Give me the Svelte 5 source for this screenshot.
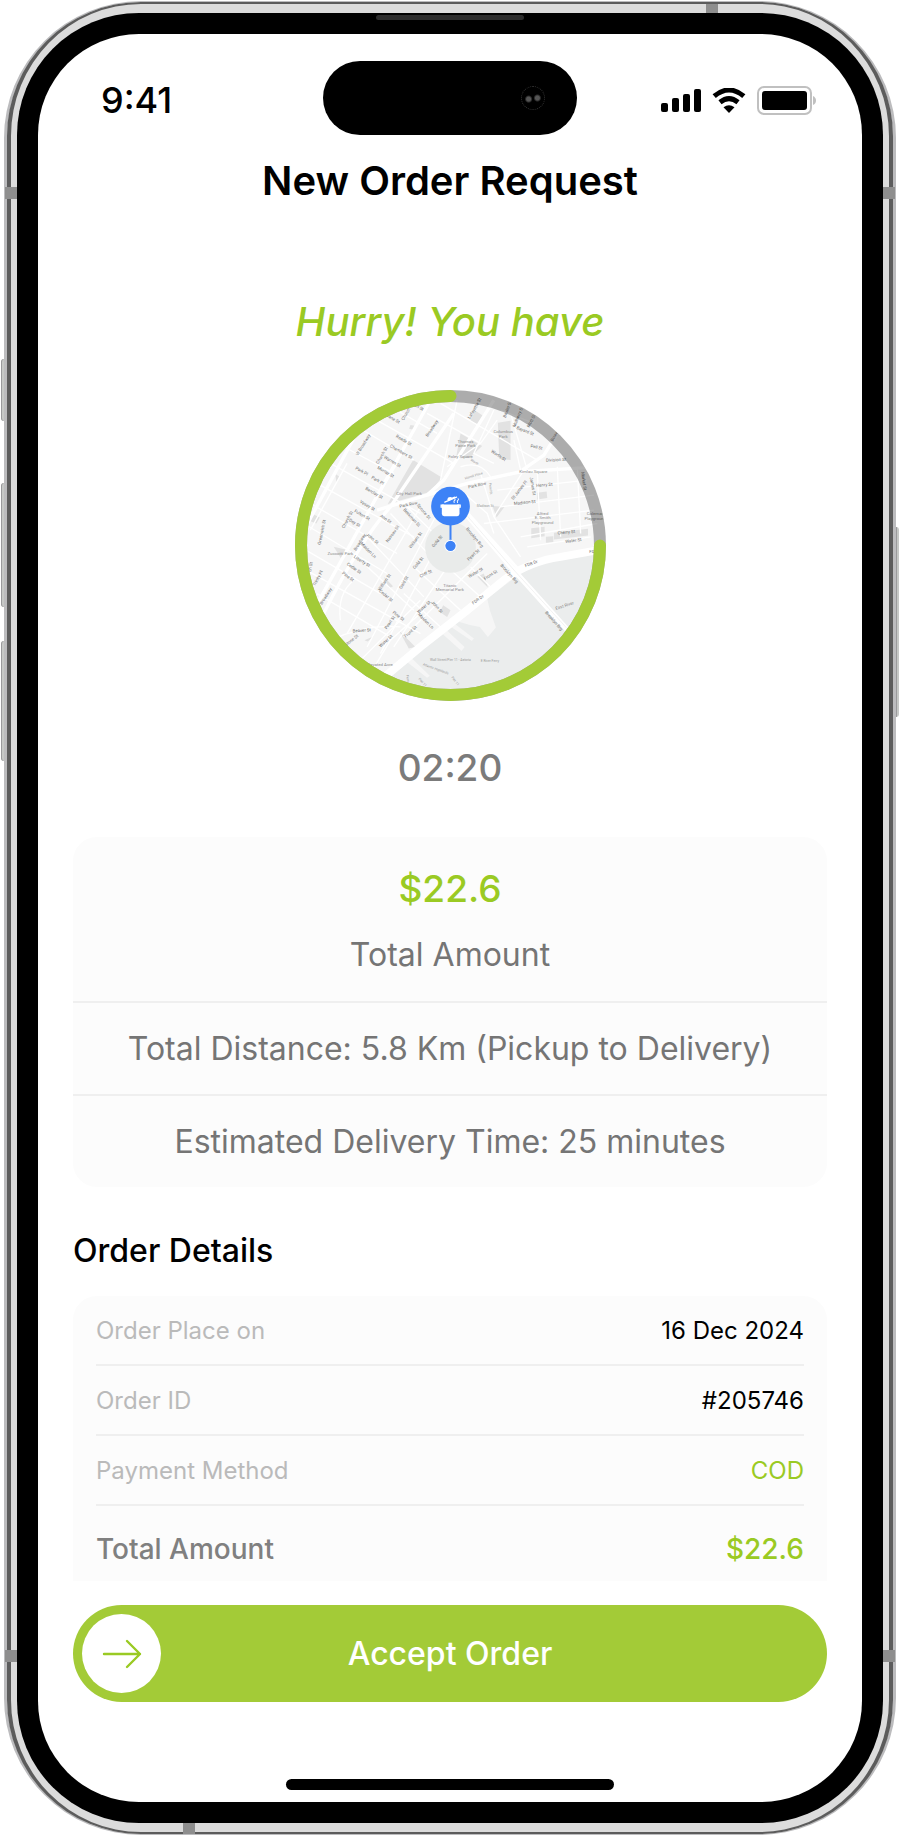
<script lang="ts">
  interface Detail {
    label: string;
    value: string;
    accent?: boolean;
  }

  interface MapLabel {
    x: number;
    y: number;
    angle: number;
    text: string;
  }

  const amount = '$22.6';
  const timeLeft = '02:20';

  const details: Detail[] = [
    { label: 'Order Place on', value: '16 Dec 2024' },
    { label: 'Order ID', value: '#205746' },
    { label: 'Payment Method', value: 'COD', accent: true },
  ];

  const mainRoads = [
    'M100 690 L300 330 L450 60',
    'M130 700 Q240 480 330 380 L520 100',
    'M60 470 L250 120 L300 70',
    'M290 390 L440 345 L490 300 L640 60',
    'M440 345 L560 310 L720 275 L930 262',
    'M725 270 L790 225 L830 160',
  ];

  const streets = [
    'M150 250 L420 400',
    'M190 200 L340 280',
    'M230 140 L400 240',
    'M270 110 L520 250',
    'M330 80 L470 160',
    'M110 310 L400 470',
    'M90 370 L350 520',
    'M70 430 L320 580',
    'M60 500 L300 640',
    'M60 560 L420 760',
    'M110 640 L330 770',
    'M200 250 L90 450',
    'M350 250 L90 700',
    'M420 380 L200 760',
    'M470 400 L260 800',
    'M500 440 L300 820',
    'M560 470 L340 800',
    'M620 520 L370 770',
    'M330 400 L480 560',
    'M370 370 L560 560',
    'M260 470 L430 650',
    'M240 540 L400 690',
    'M400 560 L540 690',
    'M370 640 L480 740',
    'M500 560 L600 650',
    'M570 560 L640 630',
    'M150 780 Q260 730 360 740',
    'M230 850 L420 660',
    'M180 720 Q170 640 220 600',
    'M270 880 L330 780 L430 690',
    'M440 100 L600 190',
    'M480 70 L770 240',
    'M530 60 L480 300',
    'M640 90 L580 220 L640 250',
    'M690 100 L740 270',
    'M760 130 L660 90',
    'M720 270 L700 180',
    'M730 270 L640 410',
    'M770 270 L780 480',
    'M830 260 L840 470',
    'M890 260 L900 460',
    'M650 330 L920 300',
    'M660 380 L940 345',
    'M610 430 L940 390',
    'M720 470 L950 430',
    'M740 500 L930 470',
    'M540 330 L620 400 L640 460',
    'M600 280 L640 410 L720 530',
    'M540 260 Q600 240 630 290',
    'M500 260 L600 190 L650 120',
  ];

  const parks = [
    'M398 240 L484 292 L450 335 L322 372 Z',
    'M585 92 L612 110 L596 138 L568 122 Z',
    'M540 160 L605 198 L568 232 L526 236 Z',
    'M652 128 L690 122 L690 240 L656 236 Z',
    'M752 444 L792 440 L792 468 L752 474 Z',
    'M770 338 L798 334 L800 354 L770 358 Z',
    'M636 378 L672 380 L648 412 Z',
    'M160 500 L204 510 L184 538 Z',
    'M165 282 L178 290 L168 308 Z',
    'M310 590 L338 618 L326 624 Z',
    'M796 470 L818 468 L818 486 L796 488 Z',
    'M95 400 L118 412 L108 430 L92 424 Z',
    'M440 518 L462 520 L450 540 Z',
    'M488 675 L510 690 L500 710 L478 695 Z',
    'M355 750 L405 800 L385 805 Z',
    'M390 135 L408 138 L402 150 L386 146 Z',
    'M820 458 L922 446 L922 466 L820 478 Z',
    'M590 590 L610 580 L622 622 Z',
    'M252 780 L280 768 L262 784 Z',
  ];

  const mapLabels: MapLabel[] = [
    { x: 338, y: 116, angle: 30, text: 'Jane St' },
    { x: 376, y: 102, angle: -60, text: 'Church' },
    { x: 416, y: 82, angle: 30, text: 'ch St' },
    { x: 454, y: 145, angle: -56, text: 'Broadway' },
    { x: 582, y: 85, angle: -60, text: 'Lafayette St' },
    { x: 370, y: 180, angle: 30, text: 'Reade St' },
    { x: 362, y: 215, angle: 30, text: 'Chambers St' },
    { x: 248, y: 194, angle: -58, text: 'W Broadway' },
    { x: 304, y: 226, angle: -60, text: 'Church St' },
    { x: 336, y: 244, angle: 30, text: 'Warren St' },
    { x: 316, y: 275, angle: 30, text: 'Murray St' },
    { x: 244, y: 273, angle: 30, text: 'Park Pl' },
    { x: 292, y: 301, angle: 30, text: 'Park Pl' },
    { x: 281, y: 338, angle: 30, text: 'Barclay St' },
    { x: 261, y: 376, angle: 30, text: 'Vesey St' },
    { x: 245, y: 404, angle: 30, text: 'Fulton St' },
    { x: 223, y: 428, angle: 30, text: 'Dey St' },
    { x: 201, y: 418, angle: -62, text: 'Church St' },
    { x: 316, y: 416, angle: 35, text: 'Ann St' },
    { x: 394, y: 412, angle: 48, text: 'Beekman St' },
    { x: 430, y: 394, angle: 50, text: 'Spruce St' },
    { x: 384, y: 373, angle: -12, text: 'Park Row' },
    { x: 590, y: 315, angle: -12, text: 'Park Row' },
    { x: 336, y: 461, angle: -55, text: 'Nassau St' },
    { x: 276, y: 475, angle: 40, text: 'John St' },
    { x: 238, y: 486, angle: -58, text: 'Broadway' },
    { x: 264, y: 510, angle: 45, text: 'Maiden Ln' },
    { x: 405, y: 480, angle: -54, text: 'William St' },
    { x: 470, y: 483, angle: -50, text: 'Gold St' },
    { x: 124, y: 456, angle: -78, text: 'Greenwich St' },
    { x: 245, y: 543, angle: 32, text: 'Liberty St' },
    { x: 221, y: 564, angle: 35, text: 'Cedar St' },
    { x: 203, y: 589, angle: 35, text: 'Pine St' },
    { x: 112, y: 594, angle: -62, text: 'Trinity Pl' },
    { x: 90, y: 560, angle: -80, text: 'ch St' },
    { x: 136, y: 648, angle: -58, text: 'Broadway' },
    { x: 312, y: 606, angle: -56, text: 'William St' },
    { x: 413, y: 548, angle: -50, text: 'Gold St' },
    { x: 370, y: 607, angle: -60, text: 'Gold St' },
    { x: 436, y: 580, angle: -25, text: 'Cliff St' },
    { x: 317, y: 646, angle: 40, text: 'Cedar St' },
    { x: 578, y: 524, angle: -42, text: 'Pearl St' },
    { x: 585, y: 577, angle: -30, text: 'Water St' },
    { x: 630, y: 584, angle: -32, text: 'Front St' },
    { x: 430, y: 680, angle: -42, text: 'Water St' },
    { x: 470, y: 680, angle: 48, text: 'John St' },
    { x: 354, y: 707, angle: 38, text: 'Pine St' },
    { x: 328, y: 727, angle: -55, text: 'Pearl St' },
    { x: 436, y: 722, angle: 45, text: 'Maiden Ln' },
    { x: 390, y: 754, angle: -42, text: 'Front St' },
    { x: 244, y: 750, angle: -4, text: 'Beaver St' },
    { x: 213, y: 780, angle: -38, text: 'Stone St' },
    { x: 316, y: 782, angle: -42, text: 'Water St' },
    { x: 734, y: 152, angle: 22, text: 'Bayard St' },
    { x: 768, y: 201, angle: 12, text: 'Pell St' },
    { x: 826, y: 239, angle: -3, text: 'Division St' },
    { x: 654, y: 226, angle: 33, text: 'Worth St' },
    { x: 791, y: 314, angle: -5, text: 'Henry St' },
    { x: 716, y: 330, angle: -52, text: 'St James Pl' },
    { x: 757, y: 318, angle: 80, text: 'James St' },
    { x: 732, y: 367, angle: -6, text: 'Madison St' },
    { x: 857, y: 456, angle: -6, text: 'Cherry St' },
    { x: 878, y: 481, angle: -8, text: 'Water St' },
    { x: 680, y: 88, angle: -70, text: 'Baxter St' },
    { x: 712, y: 110, angle: -68, text: 'Mulberry St' },
    { x: 752, y: 122, angle: -62, text: 'Mott St' },
    { x: 824, y: 164, angle: -60, text: 'Bowery' },
    { x: 910, y: 303, angle: 82, text: 'Market St' },
    { x: 752, y: 550, angle: -20, text: 'FDR Dr' },
    { x: 592, y: 658, angle: -36, text: 'FDR Dr' },
    { x: 938, y: 514, angle: 0, text: 'FDR' },
    { x: 583, y: 472, angle: 50, text: 'Brooklyn Brg' },
    { x: 686, y: 580, angle: 48, text: 'Brooklyn Brg' },
    { x: 820, y: 722, angle: 48, text: 'Brooklyn Brg' },
  ];

  const placeLabels: MapLabel[] = [
    { x: 668, y: 153, angle: 0, text: 'Columbus' },
    { x: 668, y: 168, angle: 0, text: 'Park' },
    { x: 555, y: 184, angle: 0, text: 'Thomas' },
    { x: 555, y: 197, angle: 0, text: 'Paine Park' },
    { x: 540, y: 229, angle: 0, text: 'Foley Square' },
    { x: 758, y: 274, angle: 0, text: 'Kimlau Square' },
    { x: 386, y: 340, angle: 0, text: 'City Hall Park' },
    { x: 786, y: 400, angle: 0, text: 'Alfred' },
    { x: 786, y: 413, angle: 0, text: 'E. Smith' },
    { x: 786, y: 427, angle: 0, text: 'Playground' },
    { x: 944, y: 401, angle: 0, text: 'Coleman' },
    { x: 944, y: 415, angle: 0, text: 'Playground' },
    { x: 180, y: 520, angle: 0, text: 'Zuccotti Park' },
    { x: 508, y: 616, angle: 0, text: 'Titanic' },
    { x: 508, y: 629, angle: 0, text: 'Memorial Park' },
    { x: 852, y: 676, angle: -18, text: 'East River' },
    { x: 298, y: 853, angle: 0, text: 'Elevated Acre' },
  ];

  const ferryLabels: MapLabel[] = [
    { x: 510, y: 840, angle: 0, text: 'Wall Street/Pier 11 - Astoria' },
    { x: 628, y: 842, angle: 0, text: 'E River Ferry' },
    { x: 466, y: 866, angle: 20, text: 'Atlantic Highlands' },
    { x: 524, y: 902, angle: 52, text: 'Pier 11' },
    { x: 426, y: 906, angle: 48, text: 'Pier 11' },
    { x: 382, y: 896, angle: 80, text: 'Ferry' },
    { x: 614, y: 377, angle: 0, text: 'Madison St' },
    { x: 580, y: 287, angle: -18, text: 'Hamill Place' },
    { x: 630, y: 326, angle: 85, text: 'Pearl St' },
    { x: 582, y: 246, angle: 32, text: 'Worth' },
  ];

  let accepted = $state(false);
</script>

<div class="page">
  <div class="phone">
    <span class="key action"></span>
    <span class="key volume-up"></span>
    <span class="key volume-down"></span>
    <span class="key power"></span>
    <span class="band band-top"></span>
    <span class="band band-bottom"></span>
    <span class="band band-left"></span>
    <span class="band band-left low"></span>
    <span class="band band-right"></span>
    <span class="band band-right low"></span>

    <div class="rim">
      <div class="bezel">
        <span class="speaker"></span>

        <main class="screen">
          <div class="status-bar">
            <span class="clock">9:41</span>
            <div class="island"><span class="camera"></span></div>
            <div class="indicators">
              <svg class="signal" viewBox="0 0 40 23" aria-hidden="true">
                <rect x="0" y="14" width="7" height="9" rx="2" />
                <rect x="11" y="9" width="7" height="14" rx="2" />
                <rect x="22" y="5" width="7" height="18" rx="2" />
                <rect x="33" y="0" width="7" height="23" rx="2" />
              </svg>
              <svg class="wifi" viewBox="0 0 34 25" aria-hidden="true">
                <path class="wave" d="M2.2 8.2 Q17 -4.2 31.8 8.2" />
                <path class="wave" d="M8 14.2 Q17 7 26 14.2" />
                <path d="M11.5 19.2 Q17 15.2 22.5 19.2 L17 25 Z" />
              </svg>
              <svg class="battery" viewBox="0 0 60 29" aria-hidden="true">
                <rect class="shell" x="1" y="1" width="53" height="27" rx="6" />
                <rect x="5" y="5" width="45" height="19" rx="3" />
                <path class="nub" d="M56 10 Q59 11.5 59 14.5 Q59 17.5 56 19 Z" />
              </svg>
            </div>
          </div>

          <h1>New Order Request</h1>

          <p class="hurry">Hurry! You have</p>

          <svg class="countdown" viewBox="44 30 932 932" role="img" aria-label="Pickup location">
            <defs>
              <clipPath id="map-clip">
                <circle cx="510" cy="496" r="465" />
              </clipPath>
            </defs>

            <g clip-path="url(#map-clip)">
              <rect class="land" x="44" y="30" width="932" height="932" />
              {#each parks as d}
                <path class="park" {d} />
              {/each}
              {#each streets as d}
                <path class="street" {d} />
              {/each}
              {#each mainRoads as d}
                <path class="road" {d} />
              {/each}
              <path
                class="water"
                d="M980 508 L820 538 L740 565 L706 590 L620 655 L628 690 L646 742 L622 770 L598 740 L568 734
                  L540 726 L520 712 L512 722 L580 775 L574 782 L500 732 L490 742 L552 800 L543 812 L474 750
                  L390 830 L448 886 L440 892 L376 842 L310 910 L330 970 L980 970 Z"
              />
              <circle class="radius" cx="510" cy="502" r="76" />
              <path class="highway" d="M300 900 L420 800 L560 690 L670 600 Q740 545 840 530 L980 505" />
              <path class="bridge" d="M530 370 L700 570 L870 760" />
              <path class="bridge thin" d="M556 392 L720 574" />
              <path class="bridge-line" d="M540 384 L704 574 L866 752" />

              <g class="street-names">
                {#each mapLabels as l}
                  <text x={l.x} y={l.y} transform="rotate({l.angle} {l.x} {l.y})">{l.text}</text>
                {/each}
              </g>
              <g class="place-names">
                {#each placeLabels as l}
                  <text x={l.x} y={l.y} transform="rotate({l.angle} {l.x} {l.y})">{l.text}</text>
                {/each}
              </g>
              <g class="ferry-names">
                {#each ferryLabels as l}
                  <text x={l.x} y={l.y} transform="rotate({l.angle} {l.x} {l.y})">{l.text}</text>
                {/each}
              </g>
            </g>

            <circle class="track" cx="510" cy="496" r="448" />
            <path class="progress" d="M958 496 A448 448 0 1 1 510 48" />

            <!-- restaurant pin -->
            <path class="stem" d="M510 430 V490" />
            <circle class="dot" cx="510" cy="497" r="17" />
            <circle class="pin" cx="510" cy="378" r="58" />
            <g class="pot">
              <path d="M484 373 H537 V401 Q537 408 530 408 H491 Q484 408 484 401 Z" />
              <path class="handle" d="M489 375 H482 V381 H488 M532 375 H539 V381 H533" />
              <path class="lid" d="M493 366 L528 351" />
              <path d="M500 358 Q503 348 515 352 L522 349 L526 352 L505 363 Z" />
              <path class="steam" d="M521 367 Q519 363 522 361 T523 357 M531 367 Q529 363 532 361 T533 356" />
            </g>
          </svg>

          <p class="timer">{timeLeft}</p>

          <section class="card summary">
            <div class="total">
              <strong>{amount}</strong>
              <span>Total Amount</span>
            </div>
            <p>Total Distance: 5.8 Km (Pickup to Delivery)</p>
            <p>Estimated Delivery Time: 25 minutes</p>
          </section>

          <h2>Order Details</h2>

          <dl class="card details">
            {#each details as row}
              <div class="row">
                <dt>{row.label}</dt>
                <dd class:accent={row.accent}>{row.value}</dd>
              </div>
            {/each}
            <div class="row sum">
              <dt>Total Amount</dt>
              <dd class="accent">{amount}</dd>
            </div>
          </dl>

          <button class="accept" aria-pressed={accepted} onclick={() => (accepted = !accepted)}>
            <span class="knob">
              <svg viewBox="0 0 40 30" aria-hidden="true">
                <path d="M2 15 H38 M25 2 L38 15 L25 28" />
              </svg>
            </span>
            <span class="accept-label">Accept Order</span>
          </button>

          <div class="home-indicator"></div>
        </main>
      </div>
    </div>
  </div>
</div>

<style>
  :global(body) {
    margin: 0;
    background: #fff;
  }

  .page {
    padding: 1px 4px;
    font-family: Inter, 'Open Sans', sans-serif;
    color: #000;
  }

  h1,
  h2,
  p,
  dl,
  dd {
    margin: 0;
  }

  /* Phone body */
  .phone {
    position: relative;
    border: solid #bcbcbe;
    border-width: 1px 3px;
    border-radius: 137px;
  }

  .rim {
    padding: 9px 6px;
    border: solid #5c5c5c;
    border-width: 2px 4px;
    border-radius: 134px;
    background: #dcdcdc;
  }

  .bezel {
    position: relative;
    padding: 21px;
    border-radius: 122px;
    background: #000;
  }

  .key {
    position: absolute;
    left: -6px;
    width: 3px;
    border-radius: 3px 0 0 3px;
    background: #c6c8c6;
    box-shadow: inset 1px 0 #9a9a9c;
  }

  .action {
    top: 357px;
    height: 62px;
  }

  .volume-up {
    top: 481px;
    height: 124px;
  }

  .volume-down {
    top: 639px;
    height: 120px;
  }

  .power {
    top: 525px;
    left: auto;
    right: -6px;
    height: 190px;
    border-radius: 0 3px 3px 0;
  }

  .band {
    position: absolute;
    width: 12px;
    height: 12px;
    background: #8e8e8e;
  }

  .band-top {
    top: 2px;
    right: 175px;
    height: 9px;
  }

  .band-bottom {
    bottom: 0;
    left: 176px;
    height: 11px;
  }

  .band-left {
    top: 185px;
    left: -2px;
  }

  .band-right {
    top: 185px;
    right: -2px;
  }

  .band.low {
    top: auto;
    bottom: 172px;
  }

  .speaker {
    position: absolute;
    top: 2px;
    left: 50%;
    width: 148px;
    height: 5px;
    margin-left: -74px;
    border-radius: 3px;
    background: #2c2c2c;
  }

  /* Screen */
  .screen {
    display: flex;
    flex-direction: column;
    padding: 27px 35px 12px;
    border-radius: 101px;
    background: #fff;
    text-align: center;
  }

  .status-bar {
    display: grid;
    grid-template-columns: 1fr 254px 1fr;
    align-items: center;
    margin: 0 10px;
  }

  .clock {
    padding: 4px 0 0 18px;
    font-size: 36px;
    font-weight: 500;
    line-height: 40px;
    text-align: left;
  }

  .island {
    display: flex;
    align-items: center;
    justify-content: flex-end;
    height: 74px;
    padding-right: 32px;
    border-radius: 37px;
    box-sizing: border-box;
    background: #000;
  }

  .camera {
    width: 24px;
    height: 24px;
    border-radius: 50%;
    box-sizing: border-box;
    border: 1px dotted #333;
    background:
      radial-gradient(circle at 30% 55%, #555 2px, transparent 4px),
      radial-gradient(circle at 70% 50%, #555 2px, transparent 4px);
  }

  .indicators {
    display: flex;
    align-items: center;
    justify-content: flex-end;
    gap: 11px;
    padding-top: 4px;
  }

  .signal {
    width: 40px;
    height: 23px;
  }

  .wifi {
    width: 34px;
    height: 25px;
  }

  .wave {
    fill: none;
    stroke: #000;
    stroke-width: 5;
  }

  .battery {
    width: 60px;
    height: 29px;
  }

  .shell {
    fill: none;
    stroke: #c0c0c0;
    stroke-width: 2;
  }

  .nub {
    fill: #c0c0c0;
  }

  h1 {
    margin-top: 22px;
    font-size: 40px;
    font-weight: 600;
    line-height: 48px;
  }

  .hurry {
    margin-top: 93px;
    color: #9aca23;
    font-size: 40px;
    font-style: italic;
    font-weight: 500;
    line-height: 48px;
  }

  .timer {
    margin-top: 43px;
    color: #7b7b7b;
    font-size: 37px;
    font-weight: 500;
    line-height: 48px;
  }

  /* Map with countdown ring */
  .countdown {
    align-self: center;
    width: 311px;
    height: 311px;
    margin-top: 44px;
  }

  .land {
    fill: #f6f6f6;
  }

  .park {
    fill: #e2e2e2;
  }

  .water {
    fill: #ebeded;
  }

  .radius {
    fill: #e9ebea;
  }

  .street,
  .road,
  .highway,
  .bridge,
  .bridge-line {
    fill: none;
    stroke: #fff;
    stroke-width: 4;
  }

  .road {
    stroke-width: 10;
  }

  .highway {
    stroke-width: 24;
  }

  .bridge {
    stroke-width: 16;
  }

  .bridge.thin {
    stroke-width: 8;
  }

  .bridge-line {
    stroke: #ececec;
    stroke-width: 2;
  }

  .countdown text {
    text-anchor: middle;
    dominant-baseline: central;
    font-family: Roboto, sans-serif;
    font-size: 13px;
  }

  .street-names {
    fill: #6e6e6e;
  }

  .place-names {
    fill: #8c8c8c;
  }

  .ferry-names text {
    fill: #999;
    font-size: 10px;
  }

  .track,
  .progress {
    fill: none;
    stroke: #000;
    stroke-opacity: 0.3;
    stroke-width: 36;
  }

  .progress {
    stroke: #a3cb37;
    stroke-opacity: 1;
    stroke-linecap: round;
  }

  .stem {
    stroke: #3d82f6;
    stroke-width: 6;
  }

  .dot {
    fill: #3d82f6;
    stroke: #fff;
    stroke-width: 3;
  }

  .pin {
    fill: #3d82f6;
  }

  .pot {
    fill: #fff;
  }

  .handle,
  .lid,
  .steam {
    fill: none;
    stroke: #fff;
    stroke-width: 4;
    stroke-linecap: round;
  }

  .steam {
    stroke-width: 3;
  }

  /* Cards */
  .card {
    background: #fcfcfc;
    border-radius: 24px;
  }

  .summary {
    margin-top: 45px;
    color: #757575;
    font-size: 32px;
    line-height: 40px;
  }

  .total {
    display: flex;
    flex-direction: column;
    gap: 22px;
    padding: 28px 20px 26px;
  }

  .total strong {
    color: #9aca23;
    font-size: 37px;
    font-weight: 500;
    line-height: 48px;
  }

  .summary p {
    padding: 26px 20px 25px;
    border-top: 2px solid #efefef;
  }

  h2 {
    margin-top: 44px;
    font-size: 32px;
    font-weight: 500;
    line-height: 40px;
    text-align: left;
  }

  .details {
    margin-top: 25px;
    padding: 0 23px;
    border-radius: 24px 24px 0 0;
    font-size: 24px;
  }

  .row {
    display: flex;
    align-items: center;
    justify-content: space-between;
    height: 70px;
    border-bottom: 2px solid #efefef;
    box-sizing: border-box;
  }

  dt {
    color: #bababa;
  }

  .accent {
    color: #9aca23;
  }

  .row.sum {
    height: 75px;
    padding-top: 11px;
    border-bottom: 0;
    font-size: 28px;
    font-weight: 500;
  }

  .sum dt {
    color: #808080;
  }

  .accept {
    display: grid;
    grid-template-columns: 79px 1fr 79px;
    align-items: center;
    margin-top: 24px;
    padding: 9px;
    border: 0;
    border-radius: 49px;
    background: #a3cb37;
    color: #fff;
    font-family: inherit;
    font-size: 32px;
    font-weight: 500;
    line-height: 40px;
    cursor: pointer;
  }

  .knob {
    display: flex;
    align-items: center;
    justify-content: center;
    height: 79px;
    border-radius: 50%;
    background: #fff;
  }

  .knob svg {
    width: 40px;
    height: 30px;
    fill: none;
    stroke: #9aca23;
    stroke-width: 2.4;
    stroke-linecap: round;
    stroke-linejoin: round;
  }

  .home-indicator {
    align-self: center;
    width: 328px;
    max-width: 60%;
    height: 11px;
    margin-top: 77px;
    border-radius: 6px;
    background: #000;
  }
</style>
